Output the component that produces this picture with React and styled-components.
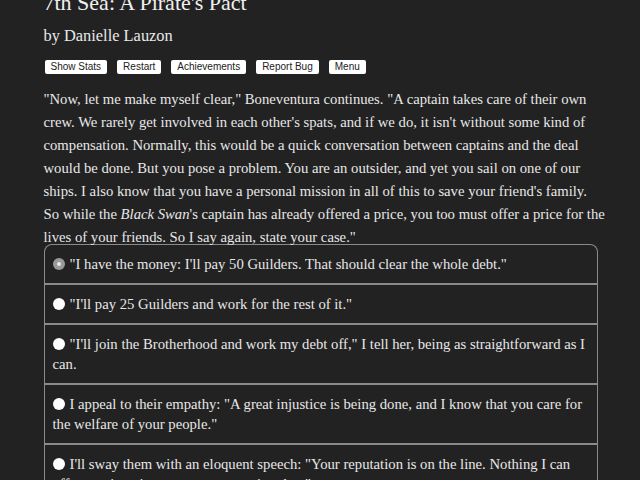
import React from 'react';
import styled, { createGlobalStyle } from 'styled-components';

const GlobalStyle = createGlobalStyle`
    html, body {
        margin: 0;
        padding: 0;
        background: #222222;
        color: #e8e8e8;
        font-family: "Liberation Serif", "Times New Roman", serif;
    }
`;

const Page = styled.div`
    width: 554px;
    margin: 0 auto;
    padding-left: 1px;
    margin-top: -11px;
`;

const Title = styled.h1`
    font-size: 22px;
    font-weight: normal;
    margin: 0;
    line-height: 28px;
    color: #f0f0f0;
`;

const Author = styled.h2`
    font-size: 16.4px;
    font-weight: normal;
    margin: 8px 0 0;
    line-height: 22px;
`;

const Toolbar = styled.div`
    display: flex;
    gap: 10px;
    margin: 13px 0 0 1px;
`;

const Button = styled.button`
    font-family: "Liberation Sans", Arial, sans-serif;
    font-size: 10px;
    line-height: 12px;
    margin: 0;
    padding: 1px 6px;
    background: #ffffff;
    color: #222;
    border: none;
    border-radius: 2px;
`;

const Story = styled.p`
    font-size: 14.7px;
    line-height: 23px;
    margin: 14px 0 0;
    white-space: nowrap;
`;

const Choices = styled.div`
    margin-top: -5px;
    border: 1px solid #8a8a8a;
    border-bottom: none;
    border-radius: 8px 8px 0 0;
`;

const Choice = styled.div`
    border-top: ${(p) => (p.$first ? 'none' : '2px solid #8a8a8a')};
    padding: 9px 8px;
    font-size: 14.7px;
    line-height: 20px;
`;

const Radio = styled.span`
    display: inline-block;
    width: 12px;
    height: 12px;
    border-radius: 50%;
    background: ${(p) => (p.$checked ? '#9a9a9a' : '#ffffff')};
    margin-right: 5px;
    vertical-align: -1px;
    position: relative;
    &::after {
        content: '';
        display: ${(p) => (p.$checked ? 'block' : 'none')};
        position: absolute;
        left: 4px;
        top: 4px;
        width: 4px;
        height: 4px;
        border-radius: 50%;
        background: #e8e8e8;
    }
`;

const options = [
    '"I have the money: I\'ll pay 50 Guilders. That should clear the whole debt."',
    '"I\'ll pay 25 Guilders and work for the rest of it."',
    '"I\'ll join the Brotherhood and work my debt off," I tell her, being as straightforward as I can.',
    'I appeal to their empathy: "A great injustice is being done, and I know that you care for the welfare of your people."',
    'I\'ll sway them with an eloquent speech: "Your reputation is on the line. Nothing I can offer you is as important as protecting that."',
];

export default function App() {
    return (
        <>
            <GlobalStyle />
            <Page>
                <Title>7th Sea: A Pirate's Pact</Title>
                <Author>by Danielle Lauzon</Author>
                <Toolbar>
                    <Button>Show Stats</Button>
                    <Button>Restart</Button>
                    <Button>Achievements</Button>
                    <Button>Report Bug</Button>
                    <Button>Menu</Button>
                </Toolbar>
                <Story>
                    "Now, let me make myself clear," Boneventura continues. "A captain takes care of their own<br />
                    crew. We rarely get involved in each other's spats, and if we do, it isn't without some kind of<br />
                    compensation. Normally, this would be a quick conversation between captains and the deal<br />
                    would be done. But you pose a problem. You are an outsider, and yet you sail on one of our<br />
                    ships. I also know that you have a personal mission in all of this to save your friend's family.<br />
                    So while the <i>Black Swan</i>'s captain has already offered a price, you too must offer a price for the<br />
                    lives of your friends. So I say again, state your case."
                </Story>
                <Choices>
                    {options.map((text, i) => (
                        <Choice key={i} $first={i === 0}>
                            <Radio $checked={i === 0} />
                            {text}
                        </Choice>
                    ))}
                </Choices>
            </Page>
        </>
    );
}
